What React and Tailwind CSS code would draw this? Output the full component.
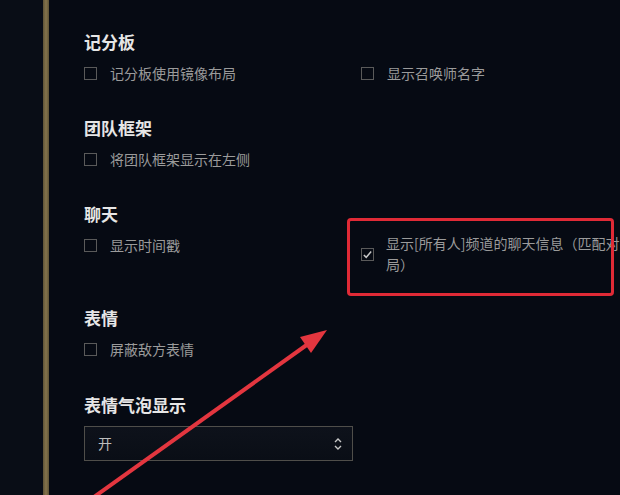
import React from 'react';

const Box = ({ checked }) => (
  <span className="w-[13px] h-[13px] shrink-0 border-[1.5px] border-[#5a5a5a] flex items-center justify-center">
    {checked && (
      <svg width="11" height="11" viewBox="0 0 12 12" fill="none">
        <path d="M2 6.5l2.6 2.6L10 2.8" stroke="#c9c9c9" strokeWidth="1.6" />
      </svg>
    )}
  </span>
);

const Option = ({ label, checked }) => (
  <div className="flex items-center gap-[13px] h-[20px]">
    <Box checked={checked} />
    <span className="text-[14px] text-[#9b9b9b] whitespace-nowrap">{label}</span>
  </div>
);

const Heading = ({ children }) => (
  <h3 className="text-[17px] leading-[20px] font-bold text-[#e6e6e6] mb-[11px]">{children}</h3>
);

export default function App() {
  return (
    <div
      className="relative w-[620px] h-[495px] overflow-hidden bg-[#060a13] flex"
      style={{ fontFamily: '"Noto Sans CJK SC", "Noto Sans", sans-serif' }}
    >
      <div className="w-[43px] shrink-0 bg-[#090d16]" />
      <div className="w-[6px] shrink-0 bg-gradient-to-r from-[#5e5236] via-[#85744c] to-[#5e5236]" />

      <div className="pl-[35px] pt-[32px] flex flex-col">
        {/* 记分板 */}
        <section className="mb-[35px]">
          <Heading>记分板</Heading>
          <div className="grid grid-cols-[277px_280px]">
            <Option label="记分板使用镜像布局" />
            <Option label="显示召唤师名字" />
          </div>
        </section>

        {/* 团队框架 */}
        <section className="mb-[35px]">
          <Heading>团队框架</Heading>
          <Option label="将团队框架显示在左侧" />
        </section>

        {/* 聊天 */}
        <section className="mb-[33px]">
          <Heading>聊天</Heading>
          <div className="grid grid-cols-[277px_280px] items-start">
            <Option label="显示时间戳" />
            <div className="flex items-center gap-[12px] -mt-[2px]">
              <Box checked />
              <span className="w-[240px] text-[14px] leading-[21px] text-[#9b9b9b]">
                显示[所有人]频道的聊天信息（匹配对局）
              </span>
            </div>
          </div>
        </section>

        {/* 表情 */}
        <section className="mb-[36px]">
          <Heading>表情</Heading>
          <Option label="屏蔽敌方表情" />
        </section>

        {/* 表情气泡显示 */}
        <section>
          <Heading>表情气泡显示</Heading>
          <div className="w-[269px] h-[35px] border border-[#4f4e4a] bg-gradient-to-b from-[#0e121b] to-[#0a0e16] flex items-center justify-between pl-[13px] pr-[10px]">
            <span className="text-[14px] text-[#bdbdbd]">开</span>
            <svg width="8" height="14" viewBox="0 0 8 14" fill="none">
              <path d="M1 5l3-3 3 3M1 9l3 3 3-3" stroke="#c8c8c8" strokeWidth="1.4" />
            </svg>
          </div>
        </section>
      </div>

      {/* annotation: highlight box */}
      <div className="absolute left-[347px] top-[218px] w-[267px] h-[78px] border-[3px] border-[#e02a36] rounded-[4px]" />

      {/* annotation: arrow */}
      <svg className="absolute inset-0 pointer-events-none" width="620" height="495" viewBox="0 0 620 495">
        <line x1="80" y1="507" x2="308" y2="344" stroke="#e3363f" strokeWidth="4" />
        <polygon points="327,330 311,353 300,337" fill="#e3363f" />
      </svg>
    </div>
  );
}
